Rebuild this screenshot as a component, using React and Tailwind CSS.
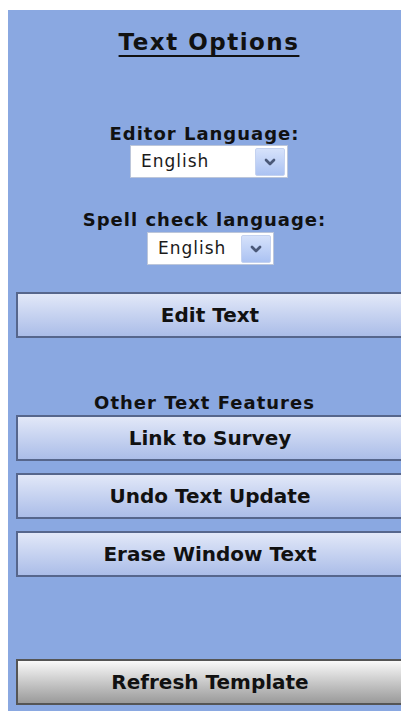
import { ChevronDown } from "lucide-react";

// language picker drawn as a plain box with a small arrow button
function LangSelect({ width }) {
  return (
    <div
      className={`flex items-center justify-between bg-white border border-[#bcc6da] h-[33px] pl-[10px] pr-[2px] ${width}`}
    >
      <span className="text-[17px] tracking-[1px] text-[#1a1a1a]">English</span>
      <div className="w-[30px] h-[28px] flex items-center justify-center bg-gradient-to-b from-[#d6e2fb] to-[#abc2f2] border border-[#c4d2f0] rounded-[2px]">
        <ChevronDown size={16} strokeWidth={4} className="text-[#4a5878]" />
      </div>
    </div>
  );
}

function BlueButton({ label }) {
  return (
    <button className="w-[388px] h-[46px] border-2 border-[#56668c] bg-gradient-to-b from-[#e2e8f8] to-[#abbde8] text-[20px] font-bold text-[#111]">
      {label}
    </button>
  );
}

export default function App() {
  return (
    <div className="min-h-[711px] bg-white pt-[10px] pl-[8px] overflow-hidden">
      <div className="bg-[#8aa8e1] h-[701px] w-[393px] font-['DejaVu_Sans',sans-serif] text-[#111]">
        <div className="pt-[18px] text-center leading-[28px] pl-[9px]">
          <span className="text-[23px] font-bold tracking-[1.5px] underline underline-offset-[5px] decoration-2">
            Text Options
          </span>
        </div>

        <div className="mt-[64px] text-center text-[18px] tracking-[1px] font-bold leading-[22px]">
          Editor Language:
        </div>
        <div className="flex justify-center pl-[9px]">
          <LangSelect width="w-[158px]" />
        </div>

        <div className="mt-[31px] text-center text-[18px] tracking-[1px] font-bold leading-[22px]">
          Spell check language:
        </div>
        <div className="flex justify-center mt-[1px] pl-[12px]">
          <LangSelect width="w-[127px]" />
        </div>

        <div className="mt-[27px] pl-[8px]">
          <BlueButton label="Edit Text" />
        </div>

        <div className="mt-[54px] text-center text-[18px] tracking-[1px] font-bold leading-[22px]">
          Other Text Features
        </div>
        <div className="flex flex-col gap-[12px] mt-[1px] pl-[8px]">
          <BlueButton label="Link to Survey" />
          <BlueButton label="Undo Text Update" />
          <BlueButton label="Erase Window Text" />
        </div>

        <div className="mt-[82px] pl-[8px]">
          <button className="w-[388px] h-[46px] border-2 border-[#555] bg-gradient-to-b from-[#fafafa] to-[#9a9a9a] text-[20px] font-bold text-[#111]">
            Refresh Template
          </button>
        </div>
      </div>
    </div>
  );
}
